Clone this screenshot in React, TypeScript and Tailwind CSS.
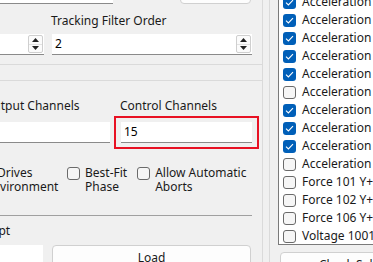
import React from 'react';

const FONT = { fontFamily: '"Noto Sans", "Open Sans", sans-serif' };

function Spinner() {
  return (
    <div className="flex flex-col w-[15px] h-[18px] border border-[#cfcfcf] bg-[#fbfbfb] rounded-[2px] mr-[1px]">
      <div className="flex-1 flex items-center justify-center border-b border-[#e2e2e2]">
        <svg width="7" height="4" viewBox="0 0 7 4"><path d="M0 4 L3.5 0 L7 4 Z" fill="#222" /></svg>
      </div>
      <div className="flex-1 flex items-center justify-center">
        <svg width="7" height="4" viewBox="0 0 7 4"><path d="M0 0 L3.5 4 L7 0 Z" fill="#222" /></svg>
      </div>
    </div>
  );
}

function Field({ w, value, spin, className = '' }: { w: string; value?: string; spin?: boolean; className?: string }) {
  return (
    <div className={`${w} h-[21px] shrink-0 bg-white border-b border-[#8a8a8a] flex items-center justify-between ${className}`}>
      <span className="pl-[3px] text-[12px] text-black leading-none">{value}</span>
      {spin && <Spinner />}
    </div>
  );
}

function Check({ checked }: { checked?: boolean }) {
  if (checked) {
    return (
      <div className="w-[13px] h-[13px] rounded-[3px] bg-[#005fb8] flex items-center justify-center shrink-0">
        <svg width="9" height="7" viewBox="0 0 9 7"><path d="M1 3.6 L3.4 6 L8 1.2" stroke="#fff" strokeWidth="1.1" fill="none" /></svg>
      </div>
    );
  }
  return <div className="w-[13px] h-[13px] rounded-[3px] border border-[#6a6a6a] bg-[#f6f6f6] shrink-0" />;
}

const channels: [string, boolean][] = [
  ['Acceleration', true],
  ['Acceleration', true],
  ['Acceleration', true],
  ['Acceleration', true],
  ['Acceleration', true],
  ['Acceleration', false],
  ['Acceleration', true],
  ['Acceleration', true],
  ['Acceleration', true],
  ['Acceleration', false],
  ['Force 101 Y+', false],
  ['Force 102 Y+', false],
  ['Force 106 Y+', false],
  ['Voltage 1001', false],
];

export default function App() {
  return (
    <div className="w-[373px] h-[262px] overflow-hidden bg-[#f0f0f0] flex text-[#1a1a1a] text-[12px]" style={FONT}>
      {/* left settings panel */}
      <div className="w-[263px] shrink-0 h-full border-r border-[#dadada] flex flex-col">
        <div className="h-[65px] shrink-0 border-b border-[#dadada] flex flex-col">
          <div className="flex shrink-0 -mt-[18px] h-[22px]">
            <div className="w-[113px] h-[22px] bg-white border-b border-[#8a8a8a]" />
            <div className="ml-[67px] w-[71px] h-[22px] bg-[#fdfdfd] border border-[#d0d0d0] rounded-[4px]" />
          </div>
          <div className="ml-[51px] mt-[9px] leading-[16px]">Tracking Filter Order</div>
          <div className="flex mt-[5px]">
            <Field w="w-[44px]" spin />
            <Field w="w-[200px]" value="2" spin className="ml-[8px]" />
          </div>
        </div>
        <div className="h-[15px] shrink-0" />
        <div className="border-t border-[#dadada] shrink-0 flex flex-col">
          <div className="flex mt-[17px] leading-[16px]">
            <span className="-ml-[16px] w-[136px]">Output Channels</span>
            <span>Control Channels</span>
          </div>
          <div className="flex items-center mt-[2px]">
            <Field w="w-[110px]" />
            <div className="ml-[4px] border-2 border-[#e81123] px-[5px] pt-[4px] pb-[4px]">
              <Field w="w-[131px]" value="15" />
            </div>
          </div>
          <div className="flex mt-[17px] leading-[14px]">
            <div className="-ml-[14px] w-[76px] flex flex-col">
              <span className="ml-[11px]">Drives</span>
              <span>Environment</span>
            </div>
            <div className="flex gap-[5px] ml-[5px] mt-[1px]">
              <Check />
              <div className="flex flex-col -mt-[1px]"><span>Best-Fit</span><span>Phase</span></div>
            </div>
            <div className="flex gap-[5px] ml-[10px] mt-[1px]">
              <Check />
              <div className="flex flex-col -mt-[1px]"><span>Allow Automatic</span><span>Aborts</span></div>
            </div>
          </div>
          <div className="w-[252px] border-b border-[#a0a0a0] mt-[21px]" />
          <div className="-ml-[22px] mt-[7px] leading-[16px]">Script</div>
          <div className="flex mt-[6px]">
            <div className="w-[43px] h-[22px] bg-white" />
            <div className="ml-[9px] w-[199px] h-[24px] bg-[#fdfdfd] border border-[#d0d0d0] rounded-[4px] flex justify-center pt-[3px]">Load</div>
          </div>
        </div>
      </div>
      {/* splitter */}
      <div className="w-[7px] shrink-0 h-full border-r border-[#dadada]" />
      {/* channel list */}
      <div className="flex-1 pl-[8px] flex flex-col">
        <div className="border-l border-b border-[#7a7a7a] bg-white h-[252px] shrink-0 -mt-[7px] overflow-hidden">
          {channels.map(([name, on], i) => (
            <div key={i} className="h-[18px] flex items-center pl-[4px] gap-[6px] whitespace-nowrap">
              <Check checked={on} />
              <span>{name}</span>
            </div>
          ))}
        </div>
        <div className="ml-[2px] mt-[7px] h-[26px] shrink-0 bg-[#fdfdfd] border border-[#d0d0d0] rounded-[4px] pl-[38px] pt-[3px] whitespace-nowrap">Check Selected</div>
      </div>
    </div>
  );
}
